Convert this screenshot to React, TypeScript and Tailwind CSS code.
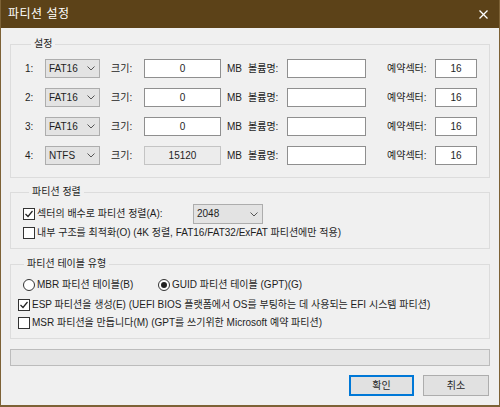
const font = { fontFamily: '"Liberation Sans", "Noto Sans CJK KR", sans-serif' };

const Chevron = () => (
  <svg width="8" height="5" viewBox="0 0 8 5" className="shrink-0">
    <polyline points="0.5,0.5 4,4 7.5,0.5" fill="none" stroke="#555" strokeWidth="1" />
  </svg>
);

const Combo = ({ value, w }: { value: string; w: string }) => (
  <div className={`${w} h-full flex items-center justify-between pl-[3px] pr-[4px] bg-[#e3e3e3] border border-[#adadad]`}>
    <span>{value}</span>
    <Chevron />
  </div>
);

const CheckBox = ({ checked }: { checked?: boolean }) => (
  <span className="w-[12px] h-[12px] shrink-0 bg-white border border-[#333] flex items-center justify-center">
    {checked && (
      <svg width="10" height="10" viewBox="0 0 10 10">
        <polyline points="1.5,5 4,7.5 8.5,2" fill="none" stroke="#222" strokeWidth="1.2" />
      </svg>
    )}
  </span>
);

const Radio = ({ checked }: { checked?: boolean }) => (
  <span className="w-[12px] h-[12px] shrink-0 rounded-full bg-white border border-[#333] flex items-center justify-center">
    {checked && <span className="w-[6px] h-[6px] rounded-full bg-[#222]" />}
  </span>
);

const rows = [
  { n: '1:', fs: 'FAT16', size: '0' },
  { n: '2:', fs: 'FAT16', size: '0' },
  { n: '3:', fs: 'FAT16', size: '0' },
  { n: '4:', fs: 'NTFS', size: '15120', disabled: true },
];

export default function App() {
  return (
    <div style={font} className="w-[500px] h-[407px] flex flex-col bg-[#f0f0f0] text-[10px] leading-[14px] text-[#1e1e1e] border-x border-b-2 border-[#7d6236]">
      <div className="h-[28px] shrink-0 flex items-center justify-between bg-[#5c4218] pl-[7px] pr-[11px] text-white text-[12px] tracking-[0.5px]">
        <span>파티션 설정</span>
        <svg width="9" height="9" viewBox="0 0 9 9">
          <line x1="0.5" y1="0.5" x2="8.5" y2="8.5" stroke="#fff" strokeWidth="1.3" />
          <line x1="8.5" y1="0.5" x2="0.5" y2="8.5" stroke="#fff" strokeWidth="1.3" />
        </svg>
      </div>

      <div className="flex-1 flex flex-col px-[9px] pt-[9px]">
        <fieldset className="border border-[#dcdcdc] pl-[14px] pt-[8px] pb-[12px] flex flex-col gap-[10px]">
          <legend className="ml-[6px] px-[3px]">설정</legend>
          {rows.map((r) => (
            <div key={r.n} className="h-[19px] flex items-center">
              <span className="w-[20px]">{r.n}</span>
              <Combo value={r.fs} w="w-[55px]" />
              <span className="ml-[11px] w-[33px]">크기:</span>
              <div className={`w-[77px] h-full flex items-center justify-center border ${r.disabled ? 'bg-[#ececec] border-[#c4c4c4]' : 'bg-white border-[#8f8f8f]'}`}>
                {r.size}
              </div>
              <span className="ml-[6px] w-[21px]">MB</span>
              <span className="w-[39px]">볼륨명:</span>
              <div className="w-[79px] h-full bg-white border border-[#8f8f8f]" />
              <span className="ml-[21px] w-[48px]">예약섹터:</span>
              <div className="w-[42px] h-full flex items-center justify-center bg-white border border-[#8f8f8f]">16</div>
            </div>
          ))}
        </fieldset>

        <fieldset className="mt-[7px] border border-[#dcdcdc] pl-[12px] pt-[5px] pb-[8px] flex flex-col">
          <legend className="ml-[6px] px-[3px]">파티션 정렬</legend>
          <div className="h-[20px] flex items-center">
            <div className="w-[170px] flex items-center gap-[2px]">
              <CheckBox checked />
              <span>섹터의 배수로 파티션 정렬(A):</span>
            </div>
            <Combo value="2048" w="w-[70px]" />
          </div>
          <div className="mt-[2px] h-[14px] flex items-center gap-[2px]">
            <CheckBox />
            <span>내부 구조를 최적화(O) (4K 정렬, FAT16/FAT32/ExFAT 파티션에만 적용)</span>
          </div>
        </fieldset>

        <fieldset className="mt-[8px] border border-[#dcdcdc] pl-[7px] pt-[7px] pb-[8px] flex flex-col">
          <legend className="ml-[6px] px-[3px]">파티션 테이블 유형</legend>
          <div className="ml-[5px] h-[14px] flex items-center">
            <div className="w-[135px] flex items-center gap-[2px]">
              <Radio />
              <span>MBR 파티션 테이블(B)</span>
            </div>
            <div className="flex items-center gap-[2px]">
              <Radio checked />
              <span>GUID 파티션 테이블 (GPT)(G)</span>
            </div>
          </div>
          <div className="mt-[6px] h-[14px] flex items-center gap-[2px]">
            <CheckBox checked />
            <span>ESP 파티션을 생성(E) (UEFI BIOS 플랫폼에서 OS를 부팅하는 데 사용되는 EFI 시스템 파티션)</span>
          </div>
          <div className="mt-[4px] h-[14px] flex items-center gap-[2px]">
            <CheckBox />
            <span>MSR 파티션을 만듭니다(M) (GPT를 쓰기위한 Microsoft 예약 파티션)</span>
          </div>
        </fieldset>

        <div className="mt-[10px] h-[17px] bg-[#e6e6e6] border border-[#bcbcbc]" />

        <div className="mt-[9px] mr-[1px] flex justify-end gap-[9px]">
          <button className="w-[65px] h-[21px] bg-[#e1e1e1] border-2 border-[#0078d7] flex items-center justify-center">확인</button>
          <button className="w-[66px] h-[21px] bg-[#e1e1e1] border border-[#adadad] flex items-center justify-center">취소</button>
        </div>
      </div>
    </div>
  );
}
